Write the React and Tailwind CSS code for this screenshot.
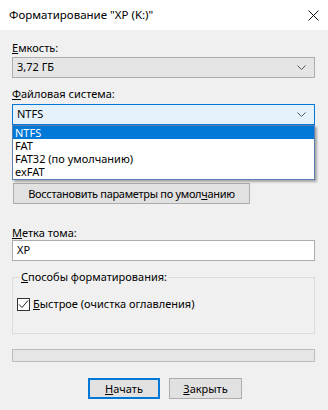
import { useState } from "react";

const Chevron = () => (
  <svg width="9" height="5" viewBox="0 0 9 5" className="shrink-0">
    <path d="M0.5 0.5 L4.5 4.5 L8.5 0.5" fill="none" stroke="#555" strokeWidth="1" />
  </svg>
);

export default function App() {
  const [fs, setFs] = useState("NTFS");
  const [quick, setQuick] = useState(true);
  const options = ["NTFS", "FAT", "FAT32 (по умолчанию)", "exFAT"];

  return (
    <div
      className="w-[328px] h-[410px] flex flex-col bg-[#f0f0f0] text-[11px] text-black overflow-hidden"
      style={{ fontFamily: '"Noto Sans", "Liberation Sans", sans-serif' }}
    >
      {/* Title bar */}
      <div className="h-[30px] bg-white flex items-center justify-between pl-[9px] pr-[9px]">
        <span className="text-[11.5px]">Форматирование "XP (K:)"</span>
        <svg width="11" height="11" viewBox="0 0 11 11">
          <path d="M0.5 0.5 L10.5 10.5 M10.5 0.5 L0.5 10.5" stroke="#111" strokeWidth="1" />
        </svg>
      </div>

      <div className="flex flex-col px-[12px] pr-[13px]">
        <div className="mt-[10px] leading-[15px]">
          <u>Е</u>мкость:
        </div>
        <div className="mt-[2px] h-[21px] border border-[#adadad] bg-[#e5e5e5] flex items-center justify-between pl-[4px] pr-[8px]">
          <span>3,72 ГБ</span>
          <Chevron />
        </div>

        <div className="mt-[8px] leading-[15px]">
          <u>Ф</u>айловая система:
        </div>
        <div className="relative mt-[3px]">
          <div className="h-[21px] border border-[#0078d7] bg-[#e5f1fb] flex items-center justify-between pl-[4px] pr-[8px]">
            <span>{fs}</span>
            <Chevron />
          </div>
          {/* open dropdown list */}
          <div className="absolute left-0 right-0 top-[21px] z-10 bg-white border border-[#5a7fb0] shadow-[2px_2px_2px_rgba(0,0,0,0.3)] flex flex-col pb-[1px]">
            {options.map((o) => (
              <div
                key={o}
                onClick={() => setFs(o)}
                className={
                  o === "NTFS"
                    ? "h-[13px] leading-[13px] pl-[2px] bg-[#0078d7] text-white whitespace-nowrap"
                    : "h-[13px] leading-[13px] pl-[2px] whitespace-nowrap"
                }
              >
                {o}
              </div>
            ))}
          </div>
        </div>

        <button className="mt-[58px] ml-[1px] w-[237px] h-[21px] border border-[#adadad] bg-[#e1e1e1] leading-none whitespace-nowrap px-0 tracking-[-0.3px]">
          Восстановить параметры по умол<u>ч</u>анию
        </button>

        <div className="mt-[21px] leading-[15px]">
          <u>М</u>етка тома:
        </div>
        <div className="h-[21px] border border-[#adadad] bg-white flex items-center pl-[4px]">
          XP
        </div>

        {/* group box */}
        <div className="relative mt-[16px] h-[57px] border border-[#dcdcdc]">
          <div className="absolute left-[7px] top-[-9px] px-[1px] bg-[#f0f0f0] leading-[15px]">
            <u>С</u>пособы форматирования:
          </div>
          <label className="flex items-center mt-[18px] ml-[4px] gap-[3px]" onClick={() => setQuick(!quick)}>
            <span className="w-[13px] h-[13px] border border-[#333] bg-white flex items-center justify-center">
              {quick && (
                <svg width="11" height="11" viewBox="0 0 11 11">
                  <path d="M1 5.5 L4 8.5 L10 1.5" fill="none" stroke="#222" strokeWidth="1" />
                </svg>
              )}
            </span>
            <span>
              <u>Б</u>ыстрое (очистка оглавления)
            </span>
          </label>
        </div>

        <div className="mt-[15px] h-[13px] border border-[#bcbcbc] bg-[#e6e6e6]" />

        <div className="mt-[16px] flex justify-center gap-[9px] pl-[3px]">
          <button className="w-[72px] h-[21px] border-2 border-[#0078d7] bg-[#e1e1e1] leading-none">
            <u>Н</u>ачать
          </button>
          <button className="w-[73px] h-[21px] border border-[#adadad] bg-[#e1e1e1] leading-none">
            <u>З</u>акрыть
          </button>
        </div>
      </div>
    </div>
  );
}
